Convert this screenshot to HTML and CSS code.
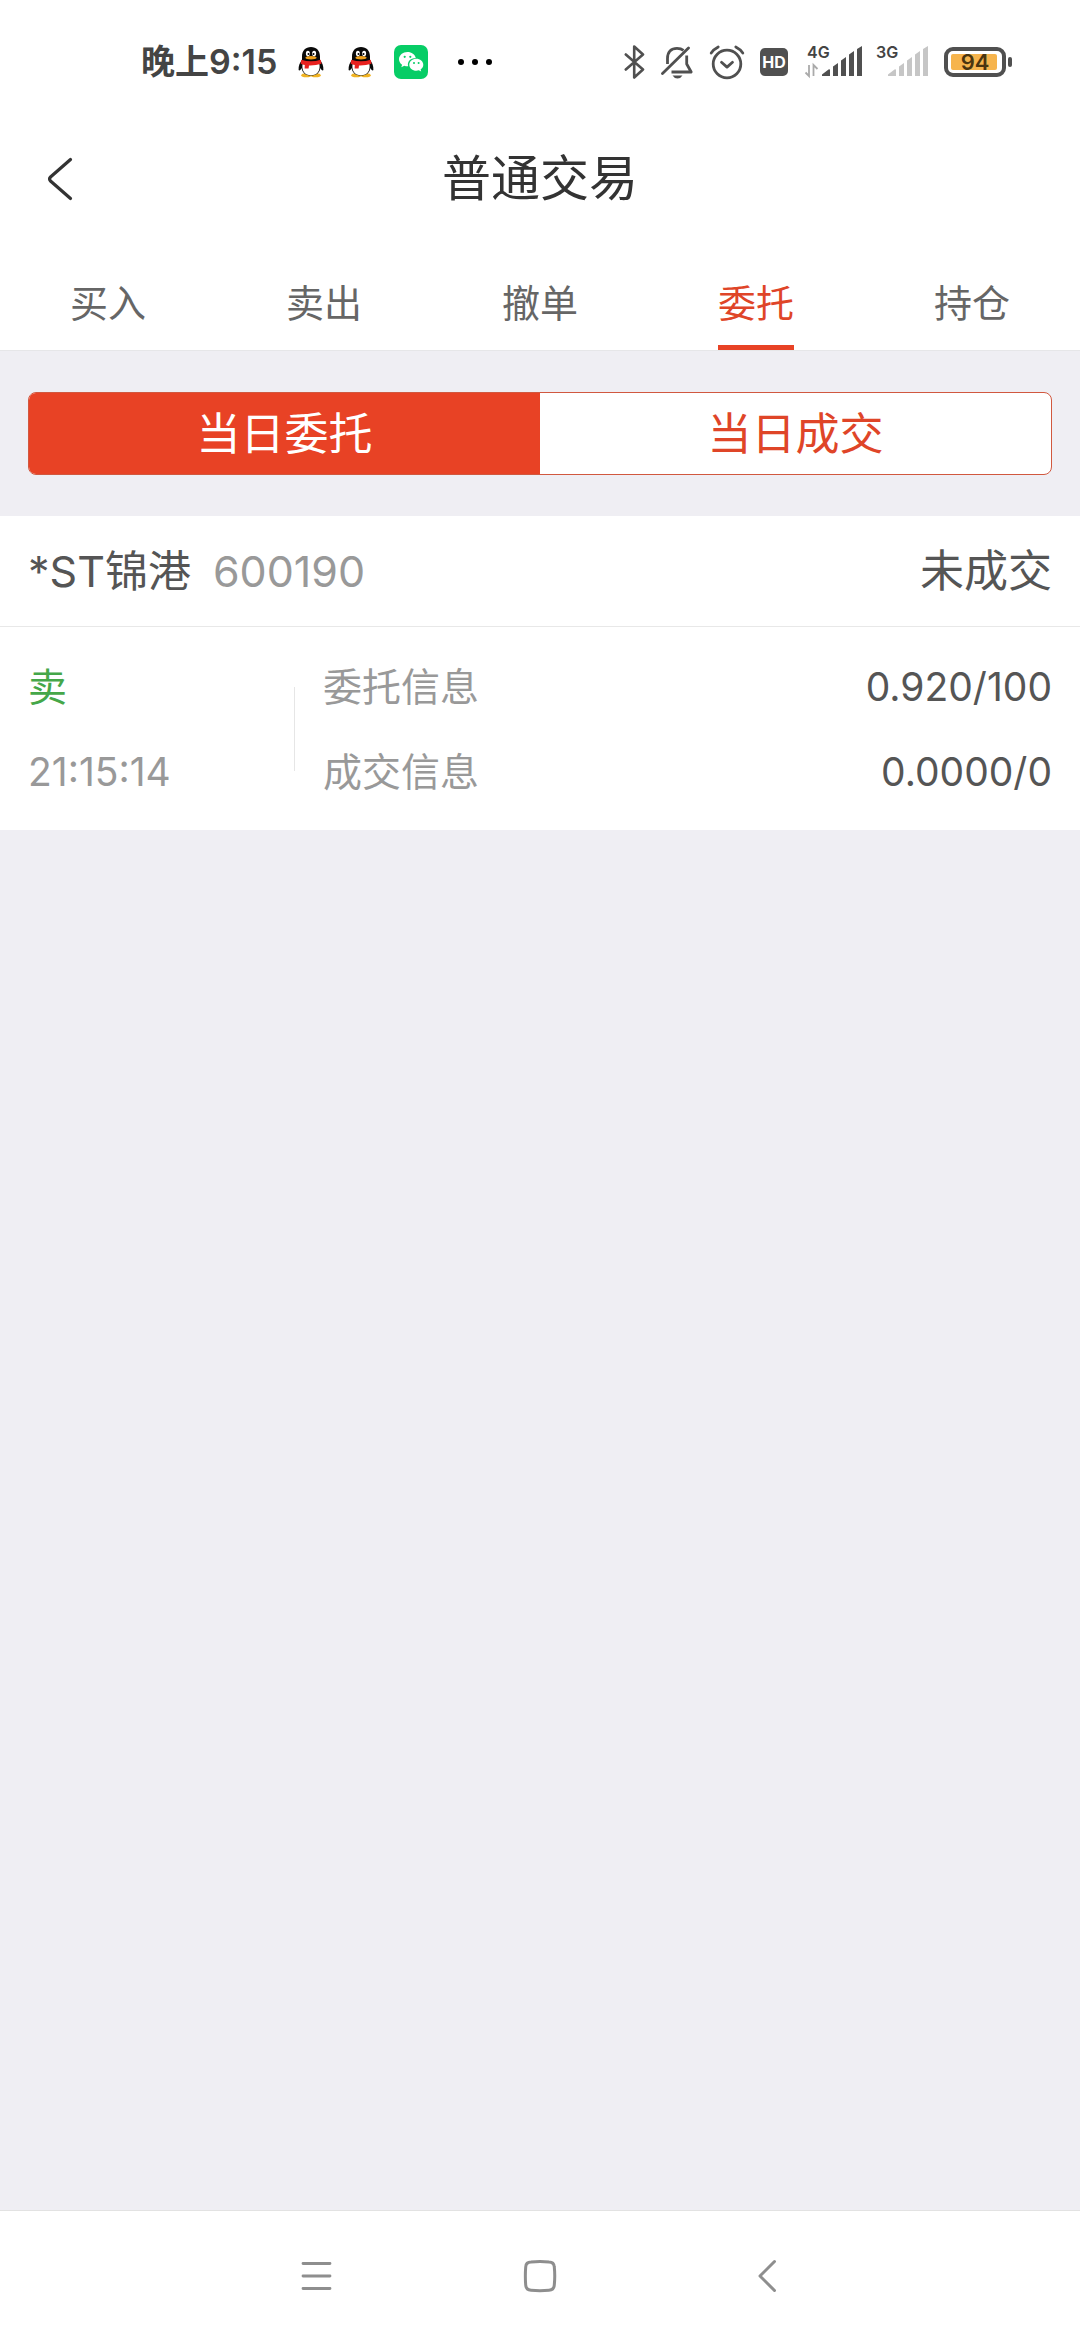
FILE: index.html
```html
<!DOCTYPE html>
<html lang="zh-CN">
<head>
<meta charset="utf-8">
<meta name="viewport" content="width=device-width, initial-scale=1">
<title>普通交易</title>
<link rel="stylesheet" href="styles.css">
</head>
<body>
<svg width="0" height="0" class="defs" aria-hidden="true">
  <symbol id="qq" viewBox="0 0 34 34">
    <ellipse cx="12.300" cy="30.300" rx="5" ry="2" fill="#f0b323"/>
    <ellipse cx="21.700" cy="30.300" rx="5" ry="2" fill="#f0b323"/>
    <path d="M17 2c-5.500 0-9 3.800-9 9.500v3.500C6 17.500 4.300 20.500 4.600 25c.8 1.200 2.200-.4 3-2 .6 5 4.400 7.500 9.400 7.500s8.800-2.500 9.400-7.500c.8 1.600 2.200 3.200 3 2 .3-4.500-1.400-7.500-3.400-10v-3.500C26 5.800 22.500 2 17 2z" fill="#0a0a0a"/>
    <path d="M8.800 18q8.200 3 16.400 0c1.800 7.500-2 12.300-8.200 12.300S7 25.500 8.800 18z" fill="#fff"/>
    <ellipse cx="13.900" cy="8.600" rx="2" ry="2.800" fill="#fff"/>
    <ellipse cx="20.100" cy="8.600" rx="2" ry="2.800" fill="#fff"/>
    <circle cx="14.500" cy="8.900" r="1" fill="#000"/>
    <circle cx="19.500" cy="8.900" r="1" fill="#000"/>
    <ellipse cx="17" cy="12.800" rx="5.600" ry="1.700" fill="#f0a21d"/>
    <path d="M7.300 14.800q9.700 3 19.400 0l.8 4q-6 2-12.500 1.800l-.4 3h-4l.2-3.500q-2.500-.6-4.100-1.300z" fill="#e8211f"/>
  </symbol>
</svg>

<div class="status">
  <div class="status-left">
    <span class="clock">晚上9:15</span>
    <svg class="app" width="34" height="34"><use href="#qq"/></svg>
    <svg class="app" width="34" height="34"><use href="#qq"/></svg>
    <svg class="app" width="34" height="34" viewBox="0 0 34 34">
      <rect width="34" height="34" rx="7" fill="#07cd66"/>
      <path d="M13.500 7C8.800 7 5 10.200 5 14.200c0 2.200 1.200 4.200 3.100 5.500l-.8 2.500 3-1.500q1.500.5 3.200.5h.7c-1.300-4.200 2-8.200 7.600-8.200C21 9.500 17.600 7 13.500 7z" fill="#fff"/>
      <path d="M29.300 19.700c0-3.400-3.200-6-7-6s-7 2.600-7 6 3.200 6 7 6q1.300 0 2.500-.4l2.400 1.300-.6-2.100c1.600-1.100 2.700-2.800 2.700-4.800z" fill="#fff"/>
      <g fill="#07cd66"><circle cx="10.700" cy="11.800" r="1.100"/><circle cx="16.300" cy="11.800" r="1.100"/><circle cx="20" cy="18" r="1"/><circle cx="24.600" cy="18" r="1"/></g>
    </svg>
    <svg class="more" width="34" height="6" viewBox="0 0 34 6"><circle cx="3" cy="3" r="3"/><circle cx="17" cy="3" r="3"/><circle cx="31" cy="3" r="3"/></svg>
  </div>
  <div class="status-right">
    <svg width="23" height="36" viewBox="0 0 23 36" fill="none" stroke="#505050" stroke-width="2.600" stroke-linecap="round" stroke-linejoin="round"><path d="M1.800 10.500 19 25.500 10.200 33.500V2.500L19 10.500 1.800 25.500"/></svg>
    <svg width="34" height="36" viewBox="0 0 34 36" fill="none" stroke="#505050" stroke-width="2.800" stroke-linejoin="round"><path d="M6.500 20V14.500C6.500 7.500 10.500 4.300 16 4.300q4 0 6.500 2M25.700 11.500V20l4.500 8H10.500"/><path d="M1.500 29.500 27.500 4" stroke-linecap="round"/><path d="M11.500 31.500h10q-1.800 3-5 3t-5-3z" fill="#505050" stroke="none"/></svg>
    <svg width="37" height="36" viewBox="0 0 37 36" fill="none" stroke="#505050" stroke-width="2.800" stroke-linecap="round" stroke-linejoin="round"><circle cx="18" cy="20" r="13.800"/><path d="m12.500 18.300 5.500 4.800 5.500-4.800M2.200 9q2.500-3.700 7-6M33.800 9q-2.500-3.700-7-6"/></svg>
    <svg width="30" height="36" viewBox="0 0 30 36"><rect y="4" width="28" height="28" rx="5" fill="#505050"/><text class="hd" x="14" y="24" text-anchor="middle">HD</text></svg>
    <svg width="58" height="44" viewBox="0 -4 58 44"><text class="net" x="3" y="14">4G</text><path d="M1.500 28.500l3.500 3.500V21M9.500 32V21l4 4" fill="none" stroke="#aaa" stroke-width="1.800"/><path d="M18 32v-1.500l6.500-5q1.500-.8 1.500.8V32zM29 22.500l5-3.500V32h-5zM37 16.500l5-3.500V32h-5zM45 10.500 50 7v25h-5zM53 5l5-3v30h-5z" fill="#505050"/></svg>
    <svg width="54" height="44" viewBox="0 -4 54 44"><text class="net" x="0" y="14">3G</text><path d="M12 32v-1.500l6.500-5q1.500-.8 1.500.8V32zM23 22.500l5-3.500V32h-5zM31 16.500l5-3.500V32h-5zM39 10.500 44 7v25h-5zM47 5l5-3v30h-5z" fill="#c6c6c6"/></svg>
    <svg width="68" height="36" viewBox="0 0 68 36"><rect x="2" y="5" width="58" height="26" rx="7" fill="#fff" stroke="#505050" stroke-width="4"/><rect x="7" y="10" width="46" height="16" rx="2" fill="#f6b44d"/><rect x="64" y="13" width="4" height="10" rx="2" fill="#505050"/><text class="level" x="31" y="26" text-anchor="middle">94</text></svg>
  </div>
</div>

<header class="header">
  <button class="back" type="button" aria-label="返回"><svg width="30" height="48" viewBox="0 0 30 48" fill="none" stroke="#333" stroke-width="3.200" stroke-linecap="round" stroke-linejoin="round"><path d="M24.500 4.500 4.500 22q-2 2 0 4l20 17.500"/></svg></button>
  <h1 class="title">普通交易</h1>
</header>

<nav class="tabs">
  <a class="tab" href="#buy">买入</a>
  <a class="tab" href="#sell">卖出</a>
  <a class="tab" href="#cancel">撤单</a>
  <a class="tab active" href="#orders" aria-current="page">委托</a>
  <a class="tab" href="#positions">持仓</a>
</nav>

<main class="main">
  <div class="segments">
    <button class="segment on" type="button" aria-pressed="true">当日委托</button>
    <button class="segment" type="button" aria-pressed="false">当日成交</button>
  </div>
  <article class="order">
    <div class="order-head">
      <h2 class="stock">*ST锦港</h2>
      <span class="code">600190</span>
      <span class="state">未成交</span>
    </div>
    <div class="order-body">
      <div class="side">
        <span class="sell">卖</span>
        <time>21:15:14</time>
      </div>
      <dl class="info">
        <dt>委托信息</dt><dd>0.920/100</dd>
        <dt>成交信息</dt><dd>0.0000/0</dd>
      </dl>
    </div>
  </article>
</main>

<footer class="navbar">
  <button class="key" type="button" aria-label="菜单"><svg width="36" height="36" viewBox="0 0 36 36" fill="none" stroke="#8e8e8e" stroke-width="2.800" stroke-linecap="round"><path d="M5 5.500h27M5 18h27M5 30.500h27"/></svg></button>
  <button class="key" type="button" aria-label="主屏幕"><svg width="36" height="36" viewBox="0 0 36 36" fill="none" stroke="#8e8e8e" stroke-width="3"><path d="M9 4Q18 3 27 4 32 4 32.300 9 33.200 18 32.300 27 32 32 27 32.300 18 33.200 9 32.300 4 32 3.700 27 3 18 3.700 9 4 4 9 4z"/></svg></button>
  <button class="key" type="button" aria-label="返回上一页"><svg width="36" height="36" viewBox="0 0 36 36" fill="none" stroke="#8e8e8e" stroke-width="3" stroke-linecap="round" stroke-linejoin="round"><path d="M28.500 3.500 14 18l14.500 14.500"/></svg></button>
</footer>
</body>
</html>
```
FILE: styles.css
```css
* {
  box-sizing: border-box;
  margin: 0;
  padding: 0;
}

body {
  display: flex;
  flex-direction: column;
  min-height: 100vh;
  background: #fff;
  color: #555;
  font-family: Inter, "Noto Sans CJK SC", sans-serif;
}

button {
  border: 0;
  background: none;
  color: inherit;
  font: inherit;
}

a {
  color: inherit;
  text-decoration: none;
}

svg {
  display: block;
  flex: none;
}

.defs {
  position: absolute;
}

/* System status bar */
.status {
  display: flex;
  align-items: center;
  justify-content: space-between;
  height: 124px;
  padding: 0 68px 0 141px;
}

.status-left {
  display: flex;
  align-items: center;
  gap: 16px;
}

.status-right {
  display: flex;
  align-items: center;
  gap: 14px;
}

.clock {
  min-width: 137px;
  color: #444;
  font-size: 34px;
  font-weight: 600;
  line-height: 40px;
}

.more {
  margin-left: 14px;
}

.hd {
  fill: #fff;
  font-size: 16px;
  font-weight: 700;
}

.net {
  fill: #444;
  font-size: 16px;
  font-weight: 600;
}

.level {
  fill: #4a3510;
  font-size: 22px;
  font-weight: 600;
}

/* Page header */
.header {
  display: grid;
  grid-template-columns: 120px 1fr 120px;
  align-items: center;
  height: 110px;
}

.back {
  justify-self: start;
  padding: 12px 24px 12px 46px;
}

.title {
  color: #333;
  font-size: 49px;
  font-weight: 400;
  line-height: 64px;
  text-align: center;
}

.tabs {
  display: grid;
  grid-template-columns: repeat(5, 1fr);
  justify-items: center;
  padding-top: 34px;
  color: #666;
  font-size: 38px;
}

.tab {
  padding-bottom: 7px;
  border-bottom: 5px solid transparent;
  line-height: 70px;
}

.tab.active {
  border-color: #e84225;
  color: #df4528;
}

/* Order list */
.main {
  flex: 1;
  border-top: 1px solid #e6e6e8;
  background: #efeef3;
}

.segments {
  display: grid;
  grid-template-columns: 1fr 1fr;
  margin: 41px 28px;
  overflow: hidden;
  border: 1px solid #d1583f;
  border-radius: 8px;
  background: #fff;
}

.segment {
  height: 81px;
  color: #df4528;
  font-size: 44px;
  line-height: 60px;
}

.segment.on {
  background: #e84225;
  color: #fff;
}

.order {
  background: #fff;
}

.order-head {
  display: flex;
  align-items: center;
  height: 111px;
  padding: 0 28px;
  border-bottom: 1px solid #e8e8e8;
  font-size: 43px;
  line-height: 62px;
}

.stock {
  font-size: 43px;
  font-weight: 400;
}

.code {
  margin-left: 22px;
  color: #999;
}

.state {
  margin-left: auto;
  font-size: 44px;
}

.order-body {
  display: flex;
  align-items: center;
  padding: 17px 28px 16px;
  font-size: 39px;
  line-height: 85px;
}

.side {
  display: flex;
  flex: 0 0 266px;
  flex-direction: column;
  color: #999;
}

.sell {
  color: #45a749;
}

.info {
  display: grid;
  flex: 1;
  grid-template-columns: auto 1fr;
  padding-left: 29px;
  background: linear-gradient(#e6e6e6, #e6e6e6) left center / 1px 84px no-repeat;
}

.info dt {
  color: #999;
}

.info dd {
  text-align: right;
}

/* System navigation keys */
.navbar {
  display: grid;
  grid-template-columns: repeat(3, 224px);
  justify-content: center;
  height: 130px;
  border-top: 1px solid #e2e2e2;
}

.key {
  display: flex;
  align-items: center;
  justify-content: center;
}
```
